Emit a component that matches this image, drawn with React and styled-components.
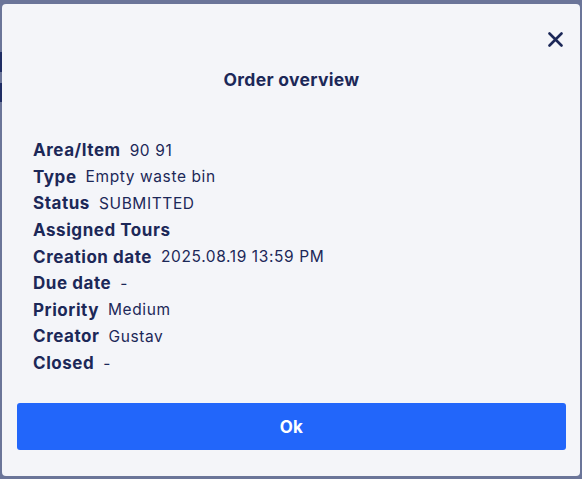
import React from "react";
import styled, { createGlobalStyle } from "styled-components";

const Global = createGlobalStyle`
  html, body { margin: 0; padding: 0; }
  body {
    width: 582px;
    height: 479px;
    overflow: hidden;
    background: #6b7599;
    font-family: Inter, "Noto Sans", sans-serif;
  }
`;

const Page = styled.div`
  position: relative;
  width: 582px;
  height: 479px;
  display: flex;
  flex-direction: column;
  gap: 11px;
  padding-top: 52px;
  box-sizing: border-box;
`;

const SideBlock = styled.div`
  width: 3px;
  height: ${(p) => p.$h}px;
  background: #1f2d64;
`;

const Backdrop = styled.div`
  position: absolute;
  inset: 0;
  display: flex;
  align-items: flex-start;
  padding: 4px 2px 3px 2px;
`;

const Modal = styled.div`
  width: 578px;
  height: 472px;
  box-sizing: border-box;
  background: #f4f5f9;
  border-radius: 4px;
  display: flex;
  flex-direction: column;
  padding: 27px 14px 26px 15px;
  color: #1c2858;
`;

const TopBar = styled.div`
  display: flex;
  justify-content: flex-end;
  padding-right: 3px;
  height: 15px;
`;

const CloseButton = styled.button`
  border: 0;
  background: none;
  padding: 0;
  width: 16px;
  height: 16px;
  display: flex;
  align-items: center;
  justify-content: center;
  cursor: pointer;
  color: #1c2858;
`;

const Title = styled.h2`
  margin: 22px 0 0;
  text-align: center;
  font-size: 17.5px;
  font-weight: 700;
  letter-spacing: 0.3px;
  line-height: 24px;
`;

const Details = styled.dl`
  margin: 45px 0 0;
  padding-left: 16px;
  display: flex;
  flex-direction: column;
`;

const Row = styled.div`
  display: flex;
  align-items: center;
  height: 26.6px;
  gap: 9px;
`;

const Label = styled.dt`
  font-size: 17px;
  font-weight: 700;
  letter-spacing: 0.55px;
  margin: 0;
`;

const Value = styled.dd`
  font-size: 15.5px;
  font-weight: 400;
  letter-spacing: 0.6px;
  margin: 0;
`;

const OkButton = styled.button`
  margin-top: auto;
  height: 47px;
  width: 100%;
  border: 0;
  border-radius: 3px;
  background: #2266fa;
  color: #ffffff;
  font-family: Inter, "Noto Sans", sans-serif;
  font-size: 17px;
  font-weight: 700;
  letter-spacing: 0.2px;
  cursor: pointer;
`;

const rows = [
  ["Area/Item", "90 91"],
  ["Type", "Empty waste bin"],
  ["Status", "SUBMITTED"],
  ["Assigned Tours", ""],
  ["Creation date", "2025.08.19 13:59 PM"],
  ["Due date", "-"],
  ["Priority", "Medium"],
  ["Creator", "Gustav"],
  ["Closed", "-"],
];

export default function App() {
  return (
    <>
      <Global />
      <Page>
        <SideBlock $h={20} />
        <SideBlock $h={19} />
        <Backdrop>
          <Modal role="dialog">
            <TopBar>
              <CloseButton aria-label="Close">
                <svg width="15" height="15" viewBox="0 0 15 15">
                  <path
                    d="M1.5 1.5 L13.5 13.5 M13.5 1.5 L1.5 13.5"
                    stroke="currentColor"
                    strokeWidth="2.6"
                    strokeLinecap="round"
                  />
                </svg>
              </CloseButton>
            </TopBar>
            <Title>Order overview</Title>
            <Details>
              {rows.map(([k, v]) => (
                <Row key={k}>
                  <Label>{k}</Label>
                  {v && <Value>{v}</Value>}
                </Row>
              ))}
            </Details>
            <OkButton>Ok</OkButton>
          </Modal>
        </Backdrop>
      </Page>
    </>
  );
}
